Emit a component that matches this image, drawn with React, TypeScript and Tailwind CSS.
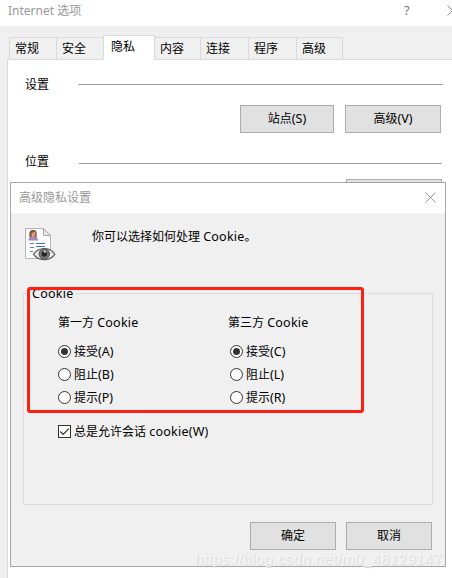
import React from 'react';

const TABS = [
  { name: '常规', width: 'w-[48px]' },
  { name: '安全', width: 'w-[48px]' },
  { name: '隐私', width: 'w-[52px]' },
  { name: '内容', width: 'w-[47px]' },
  { name: '连接', width: 'w-[49px]' },
  { name: '程序', width: 'w-[49px]' },
  { name: '高级', width: 'w-[47px]' },
];

const ACTIVE_TAB = '隐私';

// Latin runs are set a little larger than the Chinese glyphs
const Latin: React.FC<{ children: React.ReactNode }> = ({ children }) => (
  <span className="text-[12.5px] tracking-[0.25px]">{children}</span>
);

interface ButtonProps {
  label: string;
  hotkey?: string;
  className: string;
}

const Button: React.FC<ButtonProps> = ({ label, hotkey, className }) => (
  <button
    className={`flex h-7 shrink-0 items-center justify-center border border-[#adadad] bg-[#e1e1e1] leading-4 ${className}`}
  >
    {label}
    {hotkey && <span className="text-[12.5px]">({hotkey})</span>}
  </button>
);

interface SectionProps {
  title: string;
  titleClass?: string;
  lineClass: string;
}

const SectionTitle: React.FC<SectionProps> = ({ title, titleClass = '', lineClass }) => (
  <div className="flex h-4 items-center">
    <span className={`w-[53px] shrink-0 leading-4 ${titleClass}`}>{title}</span>
    <div className={`h-px bg-[#a0a0a0] ${lineClass}`} />
  </div>
);

interface RadioProps {
  label: string;
  hotkey: string;
  checked?: boolean;
}

const Radio: React.FC<RadioProps> = ({ label, hotkey, checked }) => (
  <label className="flex h-[23px] items-center gap-[3px]">
    <span className="flex h-[13px] w-[13px] items-center justify-center rounded-full border border-[#333] bg-white">
      {checked && <span className="h-[7px] w-[7px] rounded-full bg-[#333]" />}
    </span>
    <span className="leading-4">
      {label}
      <span className="text-[12.5px]">({hotkey})</span>
    </span>
  </label>
);

interface CookieGroupProps {
  title: string;
  titleClass: string;
  hotkeys: string[];
}

const CookieGroup: React.FC<CookieGroupProps> = ({ title, titleClass, hotkeys }) => (
  <div className="w-[172px]">
    <div className={`mb-[9px] h-4 leading-4 whitespace-nowrap ${titleClass}`}>
      {title} <Latin>Cookie</Latin>
    </div>
    <div className="pl-px">
      <Radio label="接受" hotkey={hotkeys[0]} checked />
      <Radio label="阻止" hotkey={hotkeys[1]} />
      <Radio label="提示" hotkey={hotkeys[2]} />
    </div>
  </div>
);

const PrivacyIcon = () => (
  <svg width="31" height="33" viewBox="0 0 31 33" fill="none">
    <path d="M.5 .5H18.5L25.5 7.5V30.5H.5Z" fill="#fcfcfc" stroke="#b5b5b5" />
    <path d="M18.5 .5V7.5H25.5Z" fill="#e4e4e4" stroke="#a8a8a8" />
    <path d="M3.5 12.5C3.5 10 5 9.5 5.5 7V4C6 1.5 10.5 1 11.5 4V8.5C12 10 13 10.5 13 12.5Z" fill="#a983c7" />
    <path d="M4.5 9C3.8 4 5 2 8 2S12.3 4 11.2 9Z" fill="#84553a" />
    <path d="M6.5 5.5C7.5 4 9.5 4.5 10.3 3.8C10.8 7 9.7 9.2 8.4 10L6.5 8.5Z" fill="#d99a76" />
    <path d="M5 15.5H9M5 19.5H9M5 23.5H8" stroke="#5a86bb" />
    <path d="M11 15.5H20M11 18.5H20" stroke="#3473c3" strokeWidth="1.2" />
    <path d="M8.5 26.3C13 19 25 18.5 29.8 26.3C25 33.5 13.5 33.5 8.5 26.3Z" fill="#e9e9e9" stroke="#666" strokeWidth="1.3" />
    <circle cx="19.3" cy="26" r="5.2" fill="#777" stroke="#505050" />
    <circle cx="19.3" cy="26" r="2.7" fill="#242424" />
    <circle cx="19.8" cy="23.8" r="1" fill="#eee" />
  </svg>
);

const CloseIcon = () => (
  <svg width="11" height="11" viewBox="0 0 11 11" fill="none" stroke="#909090">
    <path d="M.5 .5L10.5 10.5M10.5 .5L.5 10.5" />
  </svg>
);

const PrivacyDialog = () => (
  <div className="absolute top-[182px] left-[10px] flex h-[385px] w-[436px] flex-col border border-[#a6a6a6] bg-[#f0f0f0]">
    <div className="flex h-[30px] shrink-0 items-center justify-between bg-white pr-[9px] pl-2 text-[#999]">
      <span className="leading-4">高级隐私设置</span>
      <span className="-mt-[2px]">
        <CloseIcon />
      </span>
    </div>

    <div className="flex h-[80px] shrink-0 pt-[15px] pl-[14px]">
      <PrivacyIcon />
      <p className="mt-px ml-[36px] h-4 leading-4">
        你可以选择如何处理 <Latin>Cookie</Latin>。
      </p>
    </div>

    <div className="relative mx-3 h-[212px] w-[410px] shrink-0 border border-[#dcdcdc]">
      <span className="absolute -top-[8px] left-[6px] bg-[#f0f0f0] px-[2px] leading-4">
        <Latin>Cookie</Latin>
      </span>
      <div className="flex pt-[21px] pl-[33px]">
        <CookieGroup title="第一方" titleClass="pl-px" hotkeys={['A', 'B', 'P']} />
        <CookieGroup title="第三方" titleClass="-ml-px" hotkeys={['C', 'L', 'R']} />
      </div>
      <label className="mt-[14px] ml-[34px] flex items-center gap-[3px]">
        <span className="flex h-[13px] w-[13px] items-center justify-center border border-[#333] bg-white">
          <svg width="11" height="11" viewBox="0 0 11 11" fill="none" stroke="#333" strokeWidth="1.2">
            <path d="M1.3 5.5L4.2 8.4L9.8 2.6" />
          </svg>
        </span>
        <span className="mt-px leading-4">
          总是允许会话 <Latin>cookie(W)</Latin>
        </span>
      </label>
      <div className="absolute -top-[7px] left-[3px] h-[126px] w-[337px] rounded-[3px] border-3 border-[#ff2012]" />
    </div>

    <div className="mt-[17px] flex gap-[10px] pl-[239px]">
      <Button label="确定" className="w-[86px]" />
      <Button label="取消" className="w-[86px]" />
    </div>
  </div>
);

const App = () => {
  return (
    <div className="relative flex h-[578px] w-[452px] flex-col overflow-hidden bg-[#f0f0f0] font-['Noto_Sans','Noto_Sans_CJK_SC',sans-serif] text-[12px] text-black">
      <header className="flex h-[26px] shrink-0 bg-white pl-2 text-[#999]">
        <span className="mt-[3px] w-[396px] shrink-0 leading-4">
          Internet 选项
        </span>
        <span className="mt-[2px] w-[43px] shrink-0 text-[13px] leading-4 text-[#777]">?</span>
        <span className="mt-[5px] shrink-0">
          <CloseIcon />
        </span>
      </header>

      <nav className="z-10 mt-[9px] flex h-[25px] shrink-0 items-end pl-[9px]">
        {TABS.map((tab) => {
          const isActive = tab.name === ACTIVE_TAB;
          return (
            <div
              key={tab.name}
              className={`-mr-px shrink-0 border border-[#dadada] leading-4 ${tab.width} ${
                isActive
                  ? 'z-10 h-[25px] border-b-white bg-white pt-[3px] pl-[7px]'
                  : 'h-[23px] pt-[3px] pl-[5px]'
              }`}
            >
              {tab.name}
            </div>
          );
        })}
      </nav>

      <main className="-mt-px ml-[7px] flex-1 border-t border-l border-[#dadada] bg-white">
        <div className="pt-4 pl-[17px]">
          <SectionTitle title="设置" titleClass="pt-0.5" lineClass="w-[365px]" />
          <div className="mt-[13px] flex gap-[11px] pl-[215px]">
            <Button label="站点" hotkey="S" className="w-[94px]" />
            <Button label="高级" hotkey="V" className="w-[96px]" />
          </div>
          <div className="mt-[22px]">
            <SectionTitle title="位置" titleClass="pb-0.5" lineClass="ml-px w-[363px]" />
          </div>
          <div className="mt-2 pl-[321px]">
            <Button label="" className="w-[96px]" />
          </div>
        </div>
      </main>

      <PrivacyDialog />

      <div className="absolute top-[550px] left-[195px] font-['Liberation_Sans',sans-serif] text-[15px] leading-[18px] tracking-[0.38px] whitespace-nowrap text-white/60 [text-shadow:1px_1px_1px_#d6d6d6]">
        https://blog.csdn.net/m0_48129147
      </div>
    </div>
  );
};

export default App;
